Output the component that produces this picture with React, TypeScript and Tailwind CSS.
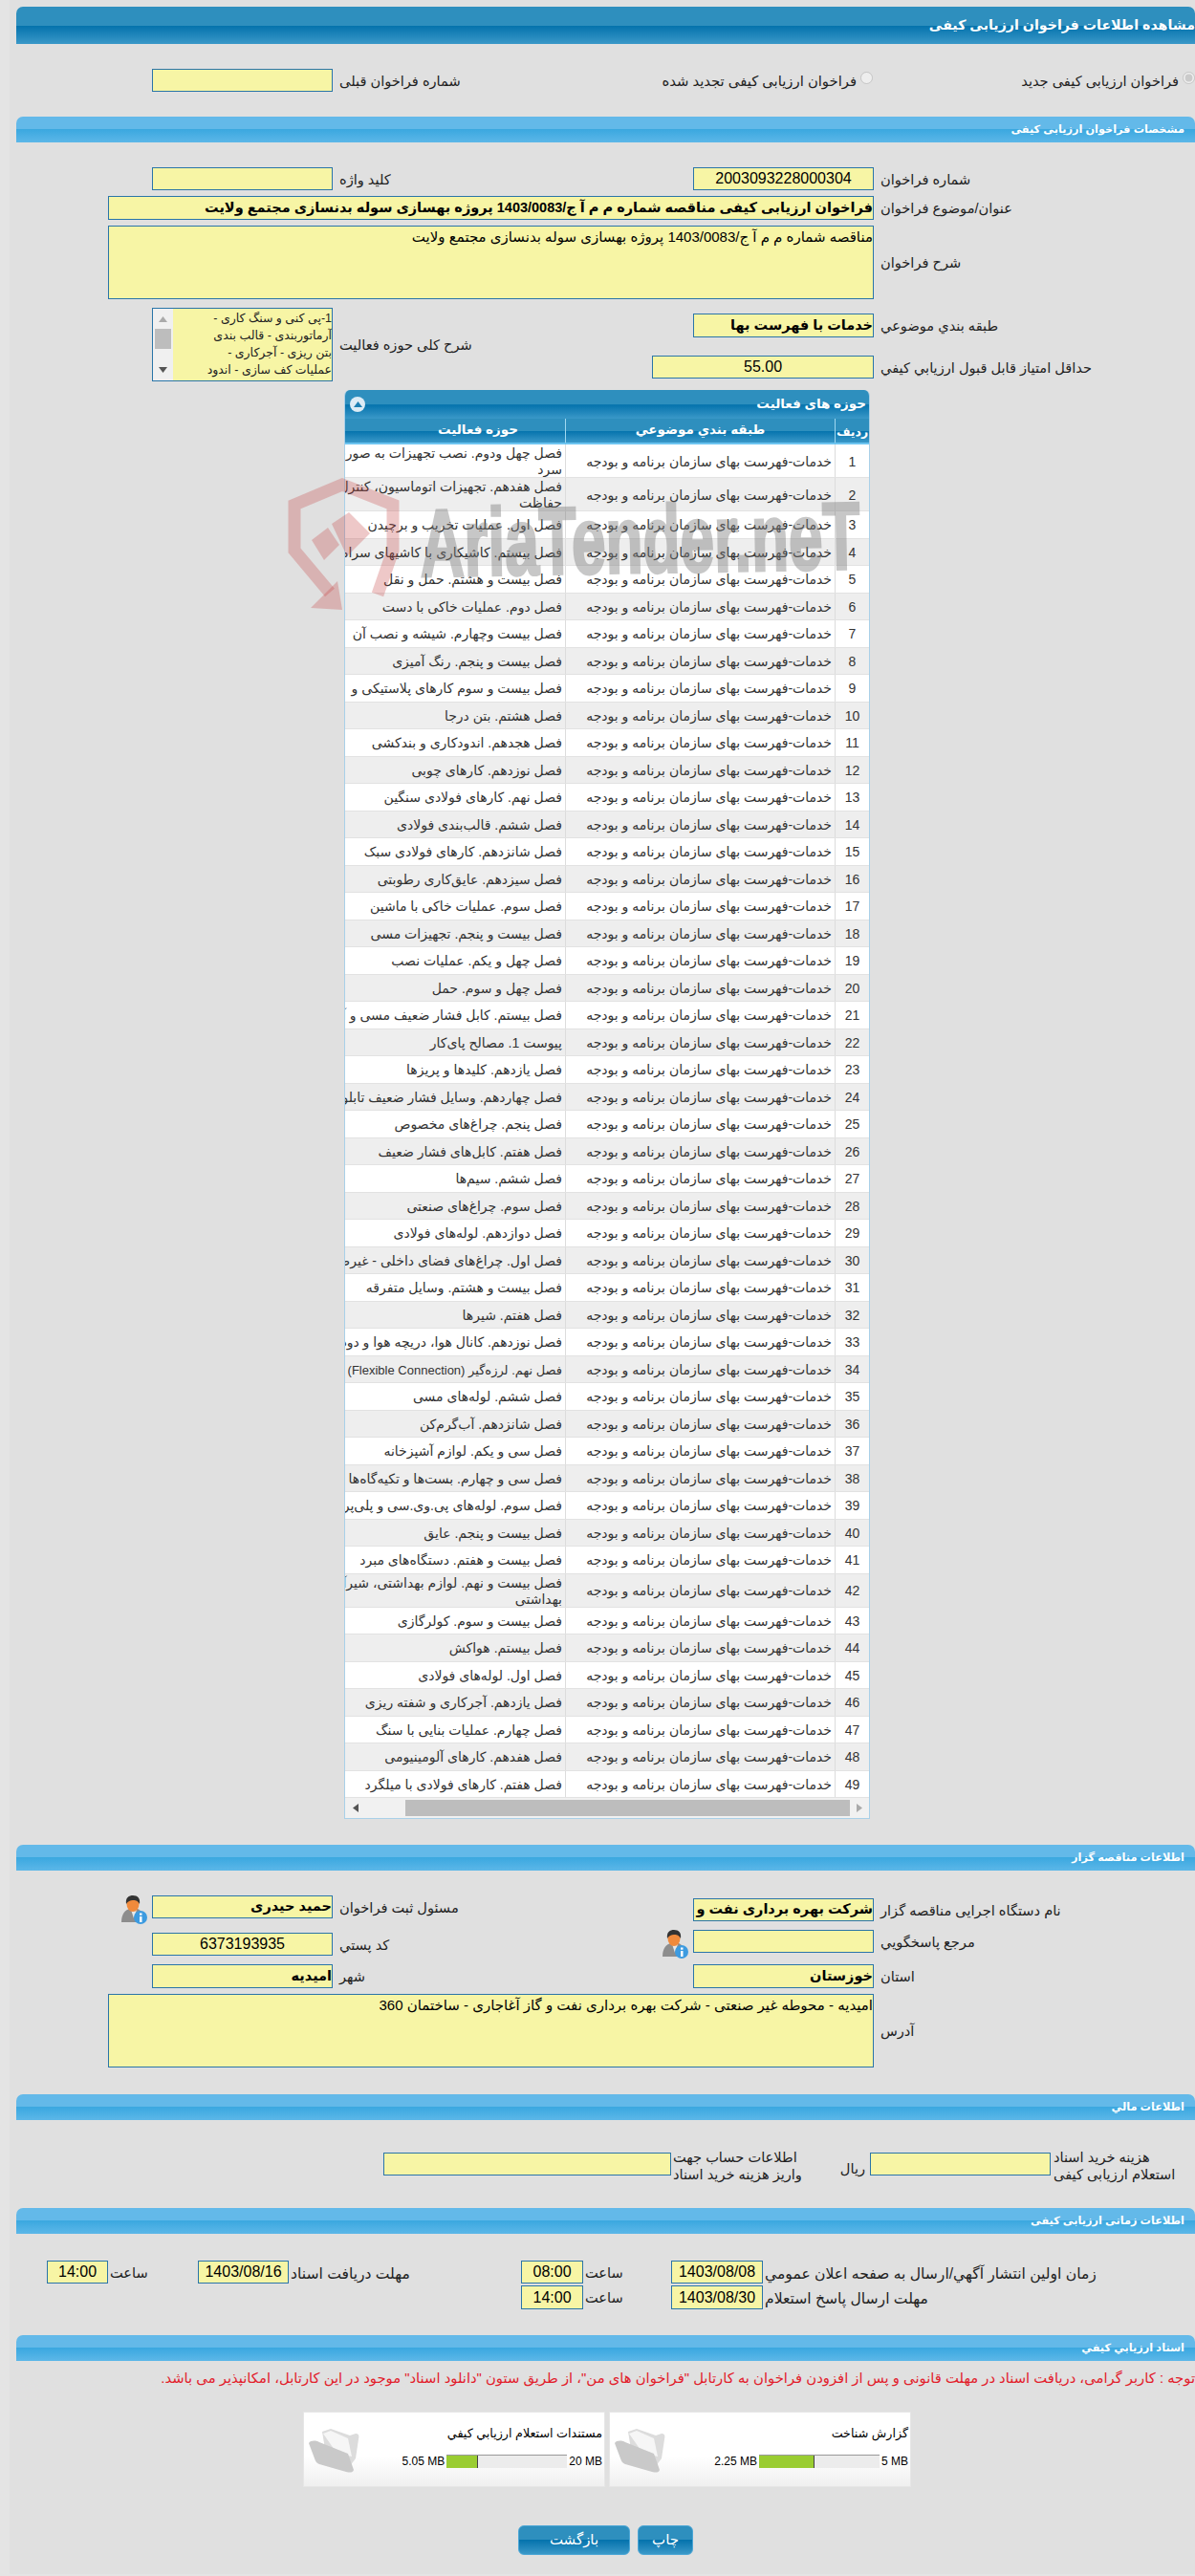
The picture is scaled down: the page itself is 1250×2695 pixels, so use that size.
import React from "react";

const inputBox = "shrink-0 border border-[#2a75a8] bg-[#f7f5a5] text-black overflow-hidden whitespace-nowrap";
const labelBase = "shrink-0 whitespace-nowrap text-left text-[#222]";
const labelCls = `${labelBase} pt-[3px] text-[14.6px]`;
const scheduleLabel = `${labelBase} pt-[3px] text-[15.6px]`;

const activities = [
  "فصل چهل ودوم. نصب تجهیزات به صورت\nسرد",
  "فصل هفدهم. تجهیزات اتوماسیون، کنترل\nحفاظت",
  "فصل اول. عملیات تخریب و برچیدن",
  "فصل بیستم. کاشیکاری با کاشیهای سرامیکی",
  "فصل بیست و هشتم. حمل و نقل",
  "فصل دوم. عملیات خاکی با دست",
  "فصل بیست وچهارم. شیشه و نصب آن",
  "فصل بیست و پنجم. رنگ آمیزی",
  "فصل بیست و سوم کارهای پلاستیکی و",
  "فصل هشتم. بتن درجا",
  "فصل هجدهم. اندودکاری و بندکشی",
  "فصل نوزدهم. کارهای چوبی",
  "فصل نهم. کارهای فولادی سنگین",
  "فصل ششم. قالب‌بندی فولادی",
  "فصل شانزدهم. کارهای فولادی سبک",
  "فصل سیزدهم. عایق‌کاری رطوبتی",
  "فصل سوم. عملیات خاکی با ماشین",
  "فصل بیست و پنجم. تجهیزات مسی",
  "فصل چهل و یکم. عملیات نصب",
  "فصل چهل و سوم. حمل",
  "فصل بیستم. کابل فشار ضعیف مسی و آلومینیومی",
  "پیوست 1. مصالح پای‌کار",
  "فصل یازدهم. کلیدها و پریزها",
  "فصل چهاردهم. وسایل فشار ضعیف تابلویی",
  "فصل پنجم. چراغ‌های مخصوص",
  "فصل هفتم. کابل‌های فشار ضعیف",
  "فصل ششم. سیم‌ها",
  "فصل سوم. چراغ‌های صنعتی",
  "فصل دوازدهم. لوله‌های فولادی",
  "فصل اول. چراغ‌های فضای داخلی - غیرصنعتی",
  "فصل بیست و هشتم. وسایل متفرقه",
  "فصل هفتم. شیرها",
  "فصل نوزدهم. کانال هوا، دریچه هوا و دودکش",
  "فصل نهم. لرزه‌گیر (Flexible Connection)",
  "فصل ششم. لوله‌های مسی",
  "فصل شانزدهم. آب‌گرم‌کن",
  "فصل سی و یکم. لوازم آشپزخانه",
  "فصل سی و چهارم. بست‌ها و تکیه‌گاه‌ها",
  "فصل سوم. لوله‌های پی.وی.سی و پلی‌پروپیلن",
  "فصل بیست و پنجم. عایق",
  "فصل بیست و هفتم. دستگاه‌های مبرد",
  "فصل بیست و نهم. لوازم بهداشتی، شیرآلات\nبهداشتی",
  "فصل بیست و سوم. کولرگازی",
  "فصل بیستم. هواکش",
  "فصل اول. لوله‌های فولادی",
  "فصل یازدهم. آجرکاری و شفته ریزی",
  "فصل چهارم. عملیات بنایی با سنگ",
  "فصل هفدهم. کارهای آلومینیومی",
  "فصل هفتم. کارهای فولادی با میلگرد",
];

function SectionBar({ title }: { title: string }) {
  return (
    <div className="flex h-[27px] items-center rounded-t-[7px] bg-[linear-gradient(#63b9e9_0,#63b9e9_48%,#3ba8e0_50%,#5cb7e8_100%)] pr-[11px] text-[11.3px] font-bold text-white">
      {title}
    </div>
  );
}

function UserIcon() {
  return (
    <svg width="28" height="30" viewBox="0 0 28 30" className="shrink-0">
      <path d="M1 28 C1 19 5 15 10 14 L18 14 C22 16 24 19 24 28 Z" fill="#8d8d8d" />
      <path d="M11 15 L14 24 L17 15 Z" fill="#e8e8e8" />
      <ellipse cx="13" cy="9" rx="6.5" ry="8" fill="#f08a3c" />
      <path d="M6 9 C5 2 9 0 13 0 C18 0 21 3 20 9 C18 5 15 5 13 5 C10 5 8 6 6 9 Z" fill="#333" />
      <circle cx="21" cy="23" r="7" fill="#3d9be0" />
      <rect x="20" y="22" width="2.5" height="6" fill="#fff" />
      <rect x="20" y="18.5" width="2.5" height="2.2" fill="#fff" />
    </svg>
  );
}

function FolderIcon() {
  return (
    <svg width="54" height="48" viewBox="0 0 54 48" className="shrink-0">
      <path d="M15 4 L24 1 L44 8 L50 6 C53 6 54 8 53 12 L50 32 L44 40 L18 22 Z" fill="#dcdcdc" />
      <path d="M16 6 L24 3 L42 11 L46 30 L30 26 Z" fill="#f6f6f6" />
      <path d="M1 16 C3 13 8 13 12 15 L42 27 L48 44 C47 47 44 47 40 46 L12 38 C9 37 8 35 7 32 Z" fill="#c9c9c9" />
    </svg>
  );
}

function DocCard({ title, used, limit, pct }: { title: string; used: string; limit: string; pct: string }) {
  return (
    <div className="flex h-[79px] w-[316px] border border-[#e6e6e6] bg-[linear-gradient(#fff_0,#fff_60%,#efefef_100%)]">
      <div className="flex flex-1 flex-col">
        <div className="mt-[12px] whitespace-nowrap pr-[2px] text-[12.7px] leading-[20px] text-black">{title}</div>
        <div className="mt-[12px] flex h-[14px] items-center pr-[2px]">
          <span dir="ltr" className="whitespace-nowrap text-[12px] text-black">{limit}</span>
          <div dir="ltr" className="mx-[2px] flex h-[14px] w-[126px] shrink-0 border-t border-[#999] bg-[#ececec]">
            <div className={`h-full border-r border-[#444] bg-[#9acd32] ${pct}`} />
          </div>
          <span dir="ltr" className="whitespace-nowrap text-[12px] text-black">{used}</span>
        </div>
      </div>
      <div className="ml-[4px] mt-[16px]">
        <FolderIcon />
      </div>
    </div>
  );
}

function DarkButton({ text, w }: { text: string; w: string }) {
  return (
    <div className={`flex h-[31px] items-center justify-center rounded-[6px] border border-[#4ba6d6] bg-[linear-gradient(#2e8fbe_0,#2e8fbe_48%,#0573ad_50%,#3a98c8_100%)] text-[15px] text-white ${w}`}>
      {text}
    </div>
  );
}

function Watermark() {
  return (
    <svg width="620" height="160" viewBox="0 0 620 160" className="pointer-events-none absolute left-[295px] top-[490px] [direction:ltr]">
      <g fill="none" stroke="#c84a4a" strokeOpacity="0.3" strokeWidth="13">
        <path d="M100 132 L116 86 L116 38 L63 17 L13 38 L13 86 L50 130" />
      </g>
      <path d="M63 148 L30 146 L58 118 Z" fill="#c84a4a" fillOpacity="0.3" />
      <path d="M31 75 L48 62 L60 80 L44 96 Z M52 58 L70 46 L92 68 L68 92 Z" fill="#c84a4a" fillOpacity="0.3" />
      <text
        x="145"
        y="113"
        direction="ltr"
        textAnchor="start"
        textLength="460"
        lengthAdjust="spacingAndGlyphs"
        transform="rotate(-1 145 113)"
        fontFamily="Liberation Sans"
        fontWeight="700"
        fontSize="100"
        fill="#7c7c7c"
        stroke="#7c7c7c"
        strokeWidth="3"
        opacity="0.42"
      >
        AriaTender.neT
      </text>
    </svg>
  );
}

export default function App() {
  return (
    <div dir="rtl" className="relative min-h-[2695px] bg-[#e4e4e4] pl-[10px] pb-[2px] font-['Liberation_Sans','DejaVu_Sans',sans-serif]">
      <div className="h-[2693px] overflow-hidden bg-[#e0e0e0] pl-[7px] pt-[7px]">
        {/* page title */}
        <div className="flex h-[39px] items-center rounded-t-[7px] bg-[linear-gradient(#2e8fbe_0,#2e8fbe_50%,#0573ad_52%,#3a98c8_100%)] text-[14.2px] font-bold text-white">
          مشاهده اطلاعات فراخوان ارزیابی کیفی
        </div>

        {/* radio row */}
        <div className="mt-[26px] flex h-[24px] items-center">
          <div className="flex w-[337px] shrink-0 items-center">
            <input type="radio" disabled defaultChecked className="m-0 -mt-[6px] h-[13px] w-[13px] shrink-0" />
            <span className="mr-[4px] pt-[3px] text-[14.6px] text-[#222]">فراخوان ارزیابی کیفی جدید</span>
          </div>
          <div className="flex w-[300px] shrink-0 items-center">
            <input type="radio" disabled className="m-0 -mt-[6px] h-[13px] w-[13px] shrink-0" />
            <span className="mr-[4px] pt-[3px] text-[14.8px] text-[#222]">فراخوان ارزیابی کیفی تجدید شده</span>
          </div>
          <div className={`${labelCls} w-[265px] pl-[7px]`}>شماره فراخوان قبلی</div>
          <div className={`${inputBox} h-[24px] w-[189px]`} />
        </div>

        <div className="mt-[26px]">
          <SectionBar title="مشخصات فراخوان ارزیابی کیفی" />
        </div>

        {/* tender spec form */}
        <div className="mt-[26px] flex h-[24px] items-center">
          <div className={`${labelCls} w-[336px] pl-[7px]`}>شماره فراخوان</div>
          <div className={`${inputBox} flex h-[24px] w-[189px] items-center justify-center text-[16px]`}>2003093228000304</div>
          <div className={`${labelCls} w-[377px] pl-[7px]`}>کلید واژه</div>
          <div className={`${inputBox} h-[24px] w-[189px]`} />
        </div>
        <div className="mt-[6px] flex h-[25px] items-center">
          <div className={`${labelCls} w-[336px] pl-[7px]`}>عنوان/موضوع فراخوان</div>
          <div className={`${inputBox} flex h-[25px] w-[801px] items-center text-[14.5px] font-bold`}>
            فراخوان ارزیابی کیفی مناقصه شماره م م آ ج/1403/0083 پروژه بهسازی سوله بدنسازی مجتمع ولایت
          </div>
        </div>
        <div className="mt-[6px] flex h-[77px] items-center">
          <div className={`${labelCls} w-[336px] pl-[7px]`}>شرح فراخوان</div>
          <div className={`${inputBox} h-[77px] w-[801px] pt-[2px] text-[15px] leading-[18px]`}>
            مناقصه شماره م م آ ج/1403/0083 پروژه بهسازی سوله بدنسازی مجتمع ولایت
          </div>
        </div>

        <div className="mt-[9px] flex h-[77px]">
          <div className="w-[568px] shrink-0 pt-[6px]">
            <div className="flex h-[25px] items-center">
              <div className={`${labelCls} w-[336px] pl-[7px]`}>طبقه بندي موضوعي</div>
              <div className={`${inputBox} flex h-[25px] w-[189px] items-center text-[14.5px] font-bold`}>خدمات با فهرست بها</div>
            </div>
            <div className="mt-[19px] flex h-[24px] items-center">
              <div className={`${labelCls} w-[336px] pl-[7px]`}>حداقل امتیاز قابل قبول ارزیابي کیفي</div>
              <div className={`${inputBox} flex h-[24px] w-[232px] items-center justify-center text-[16px]`}>55.00</div>
            </div>
          </div>
          <div className={`${labelCls} flex w-[334px] items-center justify-end pl-[7px]`}>شرح کلی حوزه فعالیت</div>
          <div className={`${inputBox} flex h-[77px] w-[189px]`}>
            <div className="flex-1 pt-[1px] text-[12.5px] leading-[18px] text-[#222]">
              1-پی کنی و سنگ کاری -<br />آرماتوربندی - قالب بندی<br />بتن ریزی - آجرکاری -<br />عملیات کف سازی - اندود
            </div>
            <div className="flex w-[21px] shrink-0 flex-col items-center bg-[#f0f0f0] pt-[8px]">
              <svg width="9" height="6" viewBox="0 0 9 6"><path d="M0 6 L4.5 0 L9 6 Z" fill="#aaa" /></svg>
              <div className="mt-[7px] h-[21px] w-[17px] bg-[#bdbdbd]" />
              <svg width="9" height="6" viewBox="0 0 9 6" className="mt-[19px]"><path d="M0 0 L4.5 6 L9 0 Z" fill="#555" /></svg>
            </div>
          </div>
        </div>

        {/* activity grid */}
        <div className="mr-[340px] mt-[9px] w-[550px] overflow-hidden rounded-t-[6px] border-x border-b border-[#a9d0e8]">
          <div className="flex h-[30px] items-center justify-between bg-[linear-gradient(#2e8fbe_0,#2e8fbe_50%,#0573ad_52%,#3a98c8_100%)] pl-[5px] pr-[3px] text-[13.5px] font-bold text-white">
            <span>حوزه های فعالیت</span>
            <span className="flex h-[16px] w-[16px] items-center justify-center rounded-full bg-[#dcebf5]">
              <svg width="9" height="6" viewBox="0 0 9 6"><path d="M0 6 L4.5 0 L9 6 Z" fill="#1c7fb3" /></svg>
            </span>
          </div>
          <div className="flex h-[27px] border-b-2 border-[#6cc4f0] bg-[linear-gradient(#2e8fbe_0,#2e8fbe_50%,#0573ad_52%,#3a98c8_100%)] text-[13.5px] font-bold text-white">
            <div className="flex w-[36px] shrink-0 items-center justify-center border-l border-[#a0d8f0] pt-[3px] text-[12.5px]">ردیف</div>
            <div className="flex w-[282px] shrink-0 items-center justify-center border-l border-[#a0d8f0]">طبقه بندي موضوعي</div>
            <div className="flex flex-1 items-center justify-center pl-[48px]">حوزه فعالیت</div>
          </div>
          {activities.map((a, i) => {
            const tall = a.includes("\n");
            return (
              <div
                key={i}
                className={`flex border-b border-[#e2e2e2] text-[#333] ${tall ? "h-[35px]" : "h-[28.5px]"} ${i % 2 ? "bg-[#eeeeee]" : "bg-white"}`}
              >
                <div className="flex w-[36px] shrink-0 items-center justify-center border-l border-[#dcdcdc] pt-[2px] text-[14px]">{i + 1}</div>
                <div className="flex w-[282px] shrink-0 items-center whitespace-nowrap border-l border-[#dcdcdc] pr-[3px] pt-[2px] text-[14px]">خدمات-فهرست بهای سازمان برنامه و بودجه</div>
                <div className={`flex flex-1 items-center overflow-hidden pr-[3px] pt-[2px] ${i === 33 ? "text-[13px]" : "text-[14px]"} ${tall ? "whitespace-pre leading-[17px]" : "whitespace-nowrap"}`}>
                  {a}
                </div>
              </div>
            );
          })}
          <div dir="ltr" className="flex h-[21px] items-center bg-[#f1f1f1]">
            <div className="flex w-[63px] shrink-0 items-center pl-[8px]">
              <svg width="6" height="9" viewBox="0 0 6 9"><path d="M6 0 L0 4.5 L6 9 Z" fill="#555" /></svg>
            </div>
            <div className="h-[17px] w-[465px] bg-[#bdbdbd]" />
            <div className="flex flex-1 justify-center">
              <svg width="6" height="9" viewBox="0 0 6 9"><path d="M0 0 L6 4.5 L0 9 Z" fill="#aaa" /></svg>
            </div>
          </div>
        </div>

        <div className="mt-[27px]">
          <SectionBar title="اطلاعات مناقصه گزار" />
        </div>

        {/* tenderer info */}
        <div className="flex">
          <div className="w-[560px] shrink-0 pt-[29px]">
            <div className="flex h-[24px] items-center">
              <div className={`${labelCls} w-[336px] pl-[7px]`}>نام دستگاه اجرایی مناقصه گزار</div>
              <div className={`${inputBox} flex h-[24px] w-[189px] items-center text-[14.5px] font-bold`}>شرکت بهره برداری نفت و گاز آغاجاری</div>
            </div>
            <div className="mt-[9px] flex h-[24px] items-center">
              <div className={`${labelCls} w-[336px] pl-[7px]`}>مرجع پاسخگويي</div>
              <div className={`${inputBox} h-[24px] w-[189px]`} />
              <div className="mr-[5px] self-start"><UserIcon /></div>
            </div>
            <div className="mt-[12px] flex h-[25px] items-center">
              <div className={`${labelCls} w-[336px] pl-[7px]`}>استان</div>
              <div className={`${inputBox} flex h-[25px] w-[189px] items-center text-[14.5px] font-bold`}>خوزستان</div>
            </div>
          </div>
          <div className="pt-[26px]">
            <div className="flex h-[24px] items-center">
              <div className={`${labelCls} w-[342px] pl-[7px]`}>مسئول ثبت فراخوان</div>
              <div className={`${inputBox} flex h-[24px] w-[189px] items-center text-[14.5px] font-bold`}>حمید حیدری</div>
              <div className="mr-[5px] self-start"><UserIcon /></div>
            </div>
            <div className="mt-[15px] flex h-[24px] items-center">
              <div className={`${labelCls} w-[342px] pl-[7px]`}>کد پستي</div>
              <div className={`${inputBox} flex h-[24px] w-[189px] items-center justify-center text-[16px]`}>6373193935</div>
            </div>
            <div className="mt-[9px] flex h-[25px] items-center">
              <div className={`${labelCls} w-[342px] pl-[7px]`}>شهر</div>
              <div className={`${inputBox} flex h-[25px] w-[189px] items-center text-[14.5px] font-bold`}>امیدیه</div>
            </div>
          </div>
        </div>
        <div className="mt-[6px] flex h-[77px] items-center">
          <div className={`${labelCls} w-[336px] pl-[7px]`}>آدرس</div>
          <div className={`${inputBox} h-[77px] w-[801px] pt-[2px] text-[15px] leading-[18px]`}>
            امیدیه - محوطه غیر صنعتی - شرکت بهره برداری نفت و گاز آغاجاری - ساختمان 360
          </div>
        </div>

        <div className="mt-[28px]">
          <SectionBar title="اطلاعات مالي" />
        </div>

        {/* financial info */}
        <div className="mt-[30px] flex h-[36px] items-start">
          <div className={`${labelBase} w-[151px] pl-[3px] text-[14.6px] leading-[18px]`}>
            هزینه خرید اسناد
            <br />
            استعلام ارزیابی کیفی
          </div>
          <div className={`${inputBox} mt-[4px] h-[24px] w-[189px]`} />
          <div className="w-[60px] shrink-0 pr-[5px] pt-[11px] text-[14.6px] text-[#222]">ریال</div>
          <div className={`${labelBase} w-[148px] pl-[2px] text-[14.6px] leading-[18px]`}>
            اطلاعات حساب جهت
            <br />
            واریز هزینه خرید اسناد
          </div>
          <div className={`${inputBox} mt-[4px] h-[24px] w-[301px]`} />
        </div>

        <div className="mt-[26px]">
          <SectionBar title="اطلاعات زمانی ارزیابی کیفی" />
        </div>

        {/* schedule */}
        <div className="mt-[28px] flex h-[24px] items-center">
          <div className={`${scheduleLabel} w-[452px] pl-[2px]`}>زمان اولین انتشار آگهي/ارسال به صفحه اعلان عمومي</div>
          <div className={`${inputBox} flex h-[24px] w-[96px] items-center justify-center text-[16px]`}>1403/08/08</div>
          <div className={`${labelCls} w-[92px] pl-[2px]`}>ساعت</div>
          <div className={`${inputBox} flex h-[24px] w-[65px] items-center justify-center text-[16px]`}>08:00</div>
          <div className={`${scheduleLabel} w-[243px] pl-[2px]`}>مهلت دریافت اسناد</div>
          <div className={`${inputBox} flex h-[24px] w-[95px] items-center justify-center text-[16px]`}>1403/08/16</div>
          <div className={`${labelCls} w-[94px] pl-[2px]`}>ساعت</div>
          <div className={`${inputBox} flex h-[24px] w-[64px] items-center justify-center text-[16px]`}>14:00</div>
        </div>
        <div className="mt-[2px] flex h-[25px] items-center">
          <div className={`${scheduleLabel} w-[452px] pl-[2px]`}>مهلت ارسال پاسخ استعلام</div>
          <div className={`${inputBox} flex h-[25px] w-[96px] items-center justify-center text-[16px]`}>1403/08/30</div>
          <div className={`${labelCls} w-[92px] pl-[2px]`}>ساعت</div>
          <div className={`${inputBox} flex h-[25px] w-[65px] items-center justify-center text-[16px]`}>14:00</div>
        </div>

        <div className="mt-[27px]">
          <SectionBar title="اسناد ارزیابي کیفي" />
        </div>

        {/* documents */}
        <div className="flex h-[34px] items-center whitespace-nowrap pt-[2px] text-[14.8px] text-[#e2202c]">
          توجه : کاربر گرامی، دریافت اسناد در مهلت قانونی و پس از افزودن فراخوان به کارتابل "فراخوان های من"، از طریق ستون "دانلود اسناد" موجود در این کارتابل، امکانپذیر می باشد.
        </div>
        <div className="mr-[297px] mt-[19px] flex gap-[4px]">
          <DocCard title="گزارش شناخت" used="2.25 MB" limit="5 MB" pct="w-[46%]" />
          <DocCard title="مستندات استعلام ارزيابي كيفي" used="5.05 MB" limit="20 MB" pct="w-[26%]" />
        </div>
        <div className="mr-[525px] mt-[40px] flex gap-[8px]">
          <DarkButton text="چاپ" w="w-[58px]" />
          <DarkButton text="بازگشت" w="w-[117px]" />
        </div>
      </div>
      <Watermark />
    </div>
  );
}
